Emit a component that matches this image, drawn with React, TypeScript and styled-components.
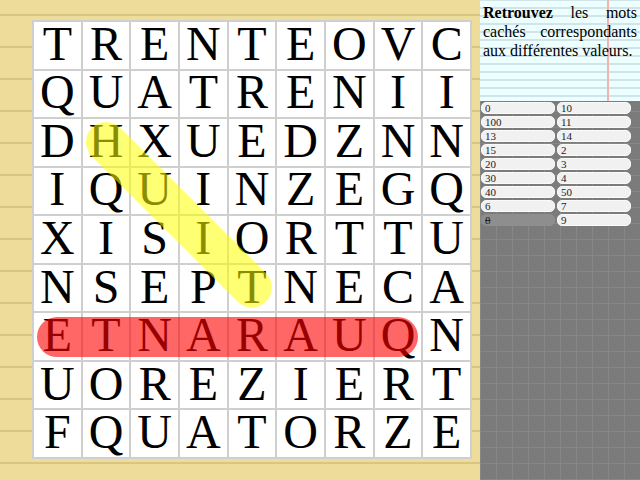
import React from "react";
import styled, { createGlobalStyle } from "styled-components";

const Global = createGlobalStyle`
  html, body { margin: 0; padding: 0; }
  body { width: 640px; height: 480px; overflow: hidden; font-family: "Liberation Serif", "Times New Roman", serif; }
`;

const ROWS = [
  "TRENTEOVC",
  "QUATRENII",
  "DHXUEDZNN",
  "IQUINZEGQ",
  "XISIORTTU",
  "NSEPTNECA",
  "ETNARAUQN",
  "UOREZIERT",
  "FQUATORZE",
];

const VALUES = ["0", "10", "100", "11", "13", "14", "15", "2", "20", "3", "30", "4", "40", "50", "6", "7", "8", "9"];
const FOUND = new Set(["8"]);

const GRID_W = 440;
const GRID_H = 439;
const CELL_W = (GRID_W - 2) / 9;
const CELL_H = (GRID_H - 2) / 9;
const BAND = 40;

const HIGHLIGHTS = [
  { from: [2, 1], to: [5, 4], color: "rgba(255,255,0,0.55)" },
  { from: [6, 0], to: [6, 7], color: "rgba(255,0,0,0.6)" },
];

const Page = styled.div`
  display: flex;
  width: 640px;
  height: 480px;
`;

const Board = styled.div`
  width: 480px;
  height: 480px;
  box-sizing: border-box;
  padding: 20px 0 0 32px;
  background-color: #eedc9a;
  background-image: repeating-linear-gradient(
    to bottom,
    transparent 0px,
    transparent 14px,
    #d9c580 14px,
    #d9c580 16px,
    transparent 16px,
    transparent 32px
  );
`;

const GridWrap = styled.div`
  position: relative;
  width: ${GRID_W}px;
  height: ${GRID_H}px;
  box-sizing: border-box;
  border: 1px solid #cfcfcf;
  display: grid;
  grid-template-columns: repeat(9, minmax(0, 1fr));
  grid-template-rows: repeat(9, minmax(0, 1fr));
  background: #fff;
`;

const Cell = styled.div`
  box-sizing: border-box;
  min-height: 0;
  border: 1px solid #cfcfcf;
  background: #fff;
  display: flex;
  align-items: center;
  justify-content: center;
  padding-bottom: 3px;
  font-family: "Liberation Serif", "Times New Roman", serif;
  font-size: 48px;
  line-height: 40px;
  color: #000;
`;

const Band = styled.div<{ $color: string }>`
  position: absolute;
  height: ${BAND}px;
  border-radius: ${BAND / 2}px;
  background: ${(p) => p.$color};
  transform-origin: ${BAND / 2}px ${BAND / 2}px;
  pointer-events: none;
`;

const Side = styled.div`
  width: 160px;
  height: 480px;
  display: flex;
  flex-direction: column;
`;

const Note = styled.div`
  height: 101px;
  box-sizing: border-box;
  padding: 3px 3px 0 3px;
  background-color: #edfefe;
  background-image:
    linear-gradient(to right, transparent 127px, #f2b3b3 127px, #f2b3b3 129px, transparent 129px),
    repeating-linear-gradient(
      to bottom,
      #d0e4e9 0px,
      #d0e4e9 1px,
      transparent 1px,
      transparent 7px,
      #d0e4e9 7px,
      #d0e4e9 8px
    );
  font-family: "Liberation Serif", "Times New Roman", serif;
  font-size: 16px;
  line-height: 19px;
  text-align: justify;
  color: #000;
`;

const Lead = styled.b`
  font-weight: bold;
`;

const Tray = styled.div`
  flex: 1;
  box-sizing: border-box;
  padding: 1px 0 0 1px;
  background-color: #7b7b7b;
  background-image:
    linear-gradient(to right, #878787 1px, transparent 1px),
    linear-gradient(to bottom, #878787 1px, transparent 1px);
  background-size: 16px 16px;
  background-position: 0px 10px;
`;

const ValueList = styled.div`
  display: grid;
  grid-template-columns: 74px 74px;
  grid-auto-rows: 12px;
  column-gap: 2px;
  row-gap: 2px;
`;

const Pill = styled.div<{ $found: boolean }>`
  box-sizing: border-box;
  border-radius: 5px;
  background: ${(p) => (p.$found ? "#8e8e8e" : "#f1f1f1")};
  border: 1px solid ${(p) => (p.$found ? "#8e8e8e" : "#fafafa")};
  padding-left: 3px;
  font-family: "Liberation Serif", "Times New Roman", serif;
  font-size: 11px;
  line-height: 10px;
  color: #222;
  text-decoration: ${(p) => (p.$found ? "line-through" : "none")};
`;

function bandStyle(from: number[], to: number[]): React.CSSProperties {
  const x1 = (from[1] + 0.5) * CELL_W;
  const y1 = (from[0] + 0.5) * CELL_H;
  const x2 = (to[1] + 0.5) * CELL_W;
  const y2 = (to[0] + 0.5) * CELL_H;
  const len = Math.hypot(x2 - x1, y2 - y1);
  const ang = (Math.atan2(y2 - y1, x2 - x1) * 180) / Math.PI;
  return {
    left: x1 - BAND / 2,
    top: y1 - BAND / 2,
    width: len + BAND,
    transform: `rotate(${ang}deg)`,
  };
}

export default function App() {
  return (
    <Page>
      <Global />
      <Board>
        <GridWrap>
          {ROWS.map((row, r) =>
            row.split("").map((ch, c) => <Cell key={`${r}-${c}`}>{ch}</Cell>)
          )}
          {HIGHLIGHTS.map((h, i) => (
            <Band key={i} $color={h.color} style={bandStyle(h.from, h.to)} />
          ))}
        </GridWrap>
      </Board>
      <Side>
        <Note>
          <Lead>Retrouvez</Lead> les mots cachés correspondants aux différentes valeurs.
        </Note>
        <Tray>
          <ValueList>
            {VALUES.map((v) => (
              <Pill key={v} $found={FOUND.has(v)}>
                {v}
              </Pill>
            ))}
          </ValueList>
        </Tray>
      </Side>
    </Page>
  );
}
